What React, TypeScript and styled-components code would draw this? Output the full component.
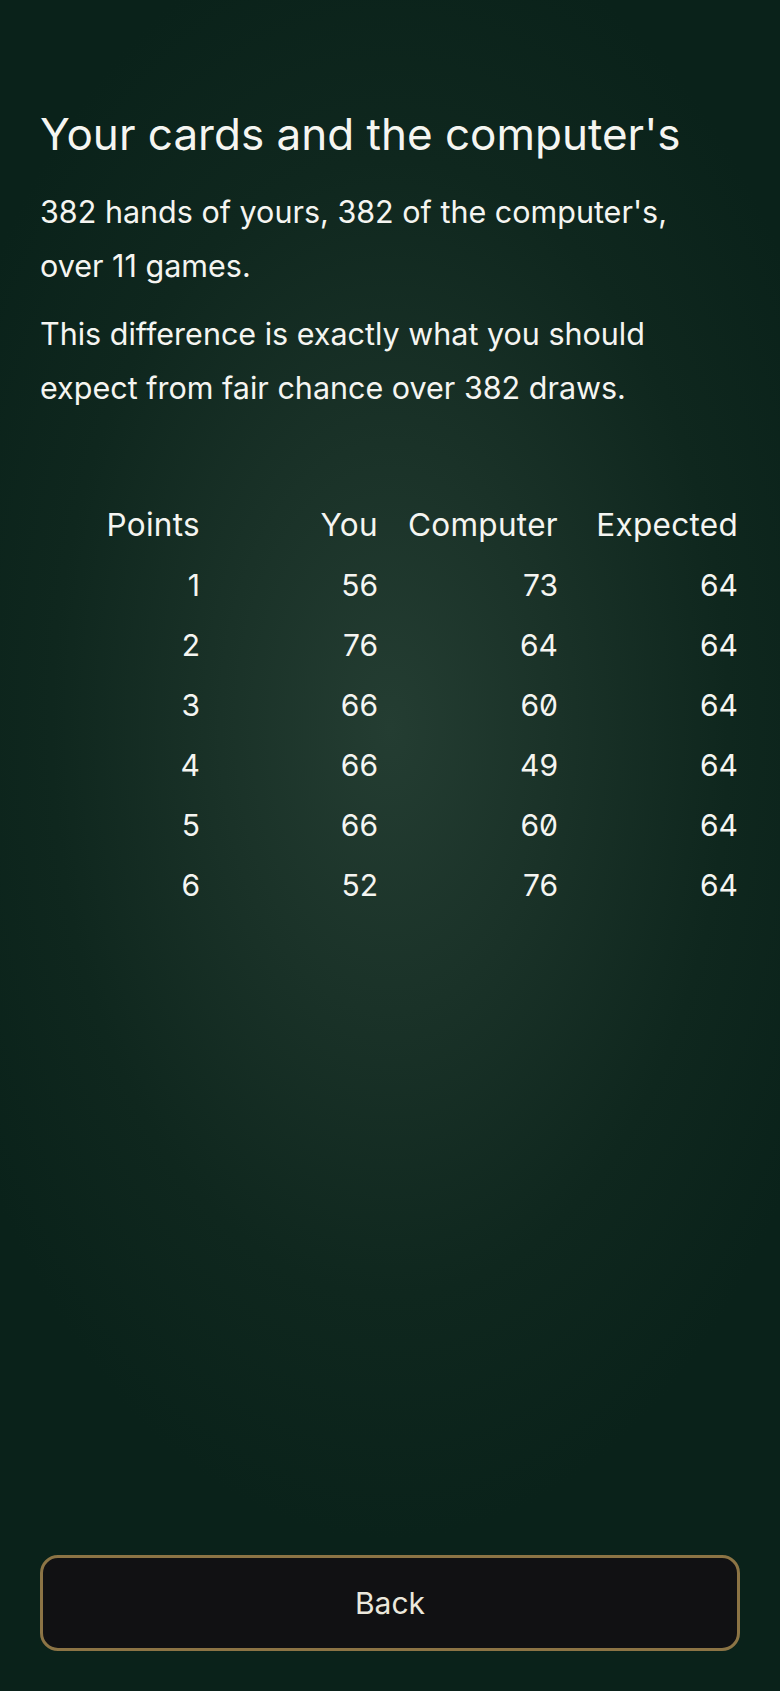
import React from "react";
import styled, { createGlobalStyle } from "styled-components";

const GlobalStyle = createGlobalStyle`
  html, body {
    margin: 0;
    padding: 0;
    background: #0a221a;
  }
  * { box-sizing: border-box; }
  body {
    font-family: Inter, "Noto Sans", "Liberation Sans", sans-serif;
    -webkit-font-smoothing: antialiased;
  }
`;

const Page = styled.main`
  min-height: 100vh;
  display: flex;
  flex-direction: column;
  padding: 108px 40px 40px;
  color: #f5f5f1;
  background:
    radial-gradient(ellipse 62% 48% at 50% 43%, #243d32 0%, #1a3228 35%, #0f271e 70%, #0a221a 100%),
    #0a221a;
`;

const Title = styled.h1`
  margin: 0 0 24px;
  font-size: 44px;
  line-height: 53px;
  font-weight: 400;
  letter-spacing: 0;
`;

const Paragraph = styled.p`
  margin: 0 0 14px;
  max-width: 665px;
  font-size: 30.5px;
  line-height: 54px;
  font-weight: 400;
`;

const Table = styled.div`
  margin-top: 66px;
  display: grid;
  grid-template-columns: 160px 178px 180px 180px;
  font-size: 30px;
  font-variant-numeric: slashed-zero;
`;

const Cell = styled.div<{ $head?: boolean }>`
  height: 60px;
  line-height: 60px;
  text-align: right;
  white-space: nowrap;
  font-size: ${(p) => (p.$head ? "31.5px" : "30px")};
  letter-spacing: ${(p) => (p.$head ? "0.3px" : "0")};
`;

const Spacer = styled.div`
  flex: 1;
`;

const BackButton = styled.button`
  width: 100%;
  height: 96px;
  border: 3px solid #8c7445;
  border-radius: 18px;
  background: #111113;
  color: #ece8dc;
  font-family: Inter, "Noto Sans", "Liberation Sans", sans-serif;
  font-size: 30px;
  font-weight: 400;
  cursor: pointer;
`;

const headers = ["Points", "You", "Computer", "Expected"];
const rows: number[][] = [
  [1, 56, 73, 64],
  [2, 76, 64, 64],
  [3, 66, 60, 64],
  [4, 66, 49, 64],
  [5, 66, 60, 64],
  [6, 52, 76, 64],
];

export default function App() {
  return (
    <>
      <GlobalStyle />
      <Page>
        <Title>Your cards and the computer's</Title>
        <Paragraph>382 hands of yours, 382 of the computer's, over 11 games.</Paragraph>
        <Paragraph>This difference is exactly what you should expect from fair chance over 382 draws.</Paragraph>
        <Table>
          {headers.map((h) => (
            <Cell key={h} $head>
              {h}
            </Cell>
          ))}
          {rows.map((r) =>
            r.map((v, i) => <Cell key={`${r[0]}-${i}`}>{v}</Cell>)
          )}
        </Table>
        <Spacer />
        <BackButton>Back</BackButton>
      </Page>
    </>
  );
}
